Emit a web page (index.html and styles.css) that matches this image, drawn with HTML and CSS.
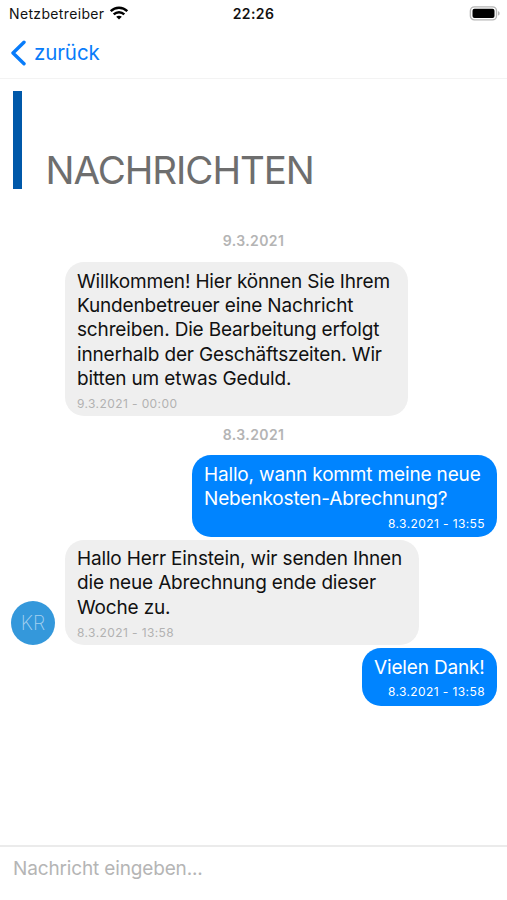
FILE: index.html
```html
<!DOCTYPE html>
<html lang="de">
<head>
<meta charset="utf-8">
<title>Nachrichten</title>
<link rel="stylesheet" href="styles.css">
</head>
<body>
<div class="status">
  <div class="carrier"><span class="carrier-name">Netzbetreiber</span>
    <svg class="wifi" width="20" height="14" viewBox="0 0 20 14" fill="none" stroke="#000" stroke-width="2.4"><path d="M1.7 5.2C6.4.5 13.6.5 18.3 5.2"/><path d="M4.7 8.4c3-2.9 7.6-2.9 10.6 0"/><path d="M10 13.6 7.2 10.8c1.6-1.5 4-1.5 5.6 0z" fill="#000" stroke="none"/></svg>
  </div>
  <span class="clock">22:26</span>
  <svg class="battery" width="32" height="15" viewBox="0 0 32 15"><rect x="1.4" y=".9" width="26.1" height="13" rx="4" fill="#fff" stroke="#b5b5b5" stroke-width="1.4"/><rect x="3.5" y="2.8" width="22" height="9.2" rx="2" fill="#000"/><path d="M29 5.2c2.2.6 2.2 3.8 0 4.4z" fill="#b5b5b5"/></svg>
</div>
<nav class="nav">
  <svg class="back" width="17" height="26" viewBox="0 0 17 26" fill="none" stroke="#087cfa" stroke-width="3.4" stroke-linecap="round" stroke-linejoin="round"><path d="M14 2.2 3 13l11 10.8"/></svg>
  <span class="back-label">zurück</span>
</nav>
<header class="header"><span class="bar"></span><h1 class="title">NACHRICHTEN</h1></header>
<main class="chat">
  <div class="date">9.3.2021</div>
  <div class="row">
    <div class="bubble welcome"><p class="text">Willkommen! Hier können Sie Ihrem<br>Kundenbetreuer eine Nachricht<br>schreiben. Die Bearbeitung erfolgt<br>innerhalb der Geschäftszeiten. Wir<br>bitten um etwas Geduld.</p><div class="time">9.3.2021 - 00:00</div></div>
  </div>
  <div class="date second">8.3.2021</div>
  <div class="row own">
    <div class="bubble question"><p class="text">Hallo, wann kommt meine neue<br>Nebenkosten-Abrechnung?</p><div class="time">8.3.2021 - 13:55</div></div>
  </div>
  <div class="row">
    <div class="avatar">KR</div>
    <div class="bubble answer"><p class="text">Hallo Herr Einstein, wir senden Ihnen<br>die neue Abrechnung ende dieser<br>Woche zu.</p><div class="time">8.3.2021 - 13:58</div></div>
  </div>
  <div class="row own">
    <div class="bubble thanks"><p class="text">Vielen Dank!</p><div class="time">8.3.2021 - 13:58</div></div>
  </div>
</main>
<footer class="composer"><span class="placeholder">Nachricht eingeben...</span></footer>
</body>
</html>
```

FILE: styles.css
```css
* { box-sizing: border-box; }
body {
  margin: 0;
  height: 900px;
  display: flex;
  flex-direction: column;
  overflow: hidden;
  background: #fff;
  color: #111;
  font-family: Inter, "Liberation Sans", sans-serif;
}
.status {
  height: 27px;
  display: grid;
  grid-template-columns: 1fr auto 1fr;
  align-items: center;
  padding: 0 6px 0 9px;
  font-size: 14px;
}
.carrier { display: flex; align-items: center; gap: 5px; }
.carrier-name { letter-spacing: .35px; }
.wifi { margin-top: -2px; }
.clock { margin-right: 3px; font-weight: 600; letter-spacing: .4px; }
.battery { justify-self: end; }
.nav {
  height: 52px;
  display: flex;
  align-items: center;
  gap: 7px;
  padding-left: 10px;
  border-bottom: 1px solid #f3f3f3;
  color: #087cfa;
  font-size: 20.5px;
}
.back-label { letter-spacing: -.1px; }
.header {
  height: 151px;
  display: flex;
  align-items: flex-start;
  padding: 12px 0 0 13px;
}
.bar { width: 9px; height: 98px; background: #0058a9; }
.title {
  margin: 55px 0 0 23.5px;
  font-size: 38.5px;
  line-height: 48px;
  font-weight: 400;
  letter-spacing: -1.05px;
  color: #6e6e6e;
}
.chat { flex: 1; padding: 0 10px; }
.date {
  height: 31.5px;
  padding-top: 2px;
  text-align: center;
  font-size: 14px;
  line-height: 18px;
  font-weight: 600;
  letter-spacing: .4px;
  color: #b4b4b4;
}
.date.second { height: 36px; padding-top: 6.5px; }
.row { display: flex; align-items: flex-end; margin-bottom: 3px; padding-left: 54.5px; }
.row:has(.avatar) { padding-left: 0; }
.own { justify-content: flex-end; }
.bubble { padding: 7.5px 12px 4px 12.5px; border-radius: 19px; background: #efefef; }
.own .bubble { background: #0084ff; color: #fff; }
.welcome { width: 343.5px; height: 154.5px; padding-top: 8px; }
.question { width: 305.5px; height: 81.5px; }
.answer { width: 354.5px; height: 105.5px; }
.thanks { width: 135.5px; height: 57.5px; }
.text { margin: 0; font-size: 19px; line-height: 24.4px; letter-spacing: -.16px; white-space: nowrap; }
.time { margin-top: 3.5px; font-size: 12px; line-height: 18px; letter-spacing: .4px; color: #b2b2b2; white-space: nowrap; }
.own .time { color: #fff; text-align: right; }
.avatar {
  width: 44px;
  height: 44px;
  margin: 0 9.5px 0 1px;
  border-radius: 50%;
  background: #3498db;
  color: #a4d0ef;
  font-size: 19.5px;
  font-weight: 200;
  line-height: 44px;
  text-align: center;
}
.composer { height: 55px; padding: 9px 13px; border-top: 2px solid #ebebeb; }
.placeholder { font-size: 19px; line-height: 26px; letter-spacing: -.15px; color: #b5b5b5; }
```
